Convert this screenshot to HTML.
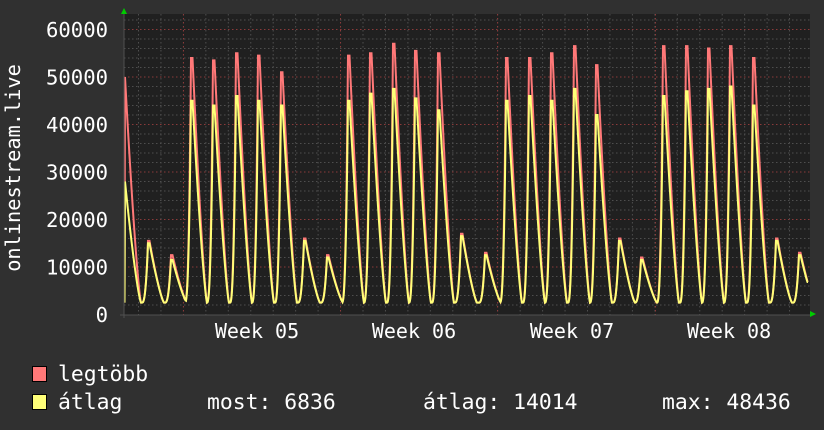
<!DOCTYPE html>
<html><head><meta charset="utf-8"><style>
html,body{margin:0;padding:0;background:#303030;}
body{width:824px;height:430px;overflow:hidden;position:relative;font-family:"DejaVu Sans Mono","Liberation Mono",monospace;color:#fff;}
svg{position:absolute;left:0;top:0;}
</style></head><body>
<svg id="g" width="824" height="430" xmlns="http://www.w3.org/2000/svg" font-family="DejaVu Sans Mono, Liberation Mono, monospace" fill="#fff">
<rect x="0" y="0" width="824" height="430" fill="#303030"/>
<rect x="124" y="14" width="686" height="301" fill="#202020"/>
<g id="grid"></g>
<path id="red" fill="none" stroke="#ff7878" stroke-width="2"/>
<path id="yel" fill="none" stroke="#ffff78" stroke-width="2"/>
<line x1="120" y1="315" x2="812" y2="315" stroke="#505050" stroke-width="1"/>
<line x1="124" y1="12" x2="124" y2="318" stroke="#505050" stroke-width="1"/>
<polygon points="121,14 127,14 124,8" fill="#0c0"/>
<polygon points="810,311 810,317 816,314" fill="#0c0"/>
<g font-size="20.6" text-anchor="end">
<text x="108" y="322">0</text>
<text x="108" y="274.5">10000</text>
<text x="108" y="227">20000</text>
<text x="108" y="179.5">30000</text>
<text x="108" y="132">40000</text>
<text x="108" y="84.5">50000</text>
<text x="108" y="37">60000</text>
</g>
<g font-size="20" text-anchor="middle">
<text x="257" y="338">Week 05</text>
<text x="414" y="338">Week 06</text>
<text x="572" y="338">Week 07</text>
<text x="729" y="338">Week 08</text>
</g>
<text font-size="20.3" text-anchor="middle" transform="translate(20,168) rotate(-90)">onlinestream.live</text>
<rect x="32.5" y="366.5" width="14" height="15" fill="#ff7878" stroke="#000"/>
<rect x="32.5" y="394.5" width="14" height="15" fill="#ffff78" stroke="#000"/>
<g font-size="21.4">
<text x="58" y="381">legtöbb</text>
<text x="58" y="409">átlag</text>
<text x="207" y="409">most: 6836</text>
<text x="423" y="409">átlag: 14014</text>
<text x="662" y="409">max: 48436</text>
</g>
</svg>
<script>
(function(){
var NS="http://www.w3.org/2000/svg",grid=document.getElementById('grid');
function ln(x1,y1,x2,y2,c){var l=document.createElementNS(NS,'line');l.setAttribute('x1',x1);l.setAttribute('y1',y1);l.setAttribute('x2',x2);l.setAttribute('y2',y2);l.setAttribute('stroke',c);l.setAttribute('stroke-dasharray','1.5,2.5');l.setAttribute('stroke-width','1');grid.appendChild(l);}
function Y(v){return 314.5-v*47.5/10000;}
for(var v=2000;v<=62000;v+=2000){var y=Y(v);if(y<14)break;ln(124,y,810,y,(v%10000==0)?'#8a3a3a':'#4e4e4e');}
for(var x=138.5;x<810;x+=22.45){ln(x,14,x,318,'#4e4e4e');}
[183.5,340.5,497.5,655.5].forEach(function(x){ln(x,14,x,318,'#8a3a3a');});
var P=[[148,15500,15000],[171,12500,11500],[191,54000,45000],[213,53500,44000],[236,55000,46000],[258,54500,45000],[281,51000,44000],[304,16000,15500],[327,12500,12000],[348,54500,45000],[370,55000,46500],[393,57000,47500],[415,55500,45500],[438,55000,43000],[461,17000,16500],[485,13000,12500],[506,54000,45000],[529,54000,46000],[551,55000,45000],[574,56500,47500],[596,52500,42000],[619,16000,15500],[641,12000,11500],[663,56500,46000],[686,56500,47000],[708,56000,47500],[730,56500,48000],[753,54000,44000],[776,16000,15500],[799,13000,12500]];
function val(x,k){var mn=2500,best=mn;
 var t0=x-125; if(t0>=0&&t0<16){var pk=k==1?50000:28000;best=Math.max(best,mn+(pk-mn)*Math.pow(1-t0/16,1.3));}
 for(var i=0;i<P.length;i++){var p=P[i][0],pk=P[i][k],t=x-p,r=0;
  if(t>=-6&&t<0)r=Math.pow((t+6)/6,2.6);
  else if(t>=0&&t<=1.5)r=1;
  else if(t>1.5&&t<16)r=Math.pow(1-(t-1.5)/14.5,1.3);
  if(r>0)best=Math.max(best,mn+(pk-mn)*r);}
 if(x>805)best=Math.max(best,6836);
 return best;}
function path(k){var d='';for(var x=124.5;x<=808;x+=0.5){d+=(d?'L':'M')+x.toFixed(1)+','+Y(val(x,k)).toFixed(1);}return d;}
document.getElementById('red').setAttribute('d',path(1));
document.getElementById('yel').setAttribute('d',path(2));
})();
</script>
</body></html>
